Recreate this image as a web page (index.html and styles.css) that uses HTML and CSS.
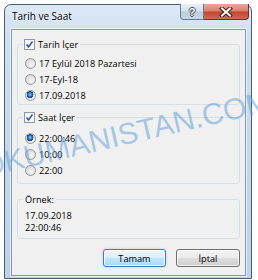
FILE: index.html
```html
<!DOCTYPE html>
<html lang="tr">
<head>
<meta charset="utf-8">
<title>Tarih ve Saat</title>
<link rel="stylesheet" href="styles.css">
</head>
<body>
<div class="window">
  <div class="titlebar">
    <span class="title">Tarih ve Saat</span>
    <div class="caption-btns">
      <span class="cbtn help">?</span>
      <span class="cbtn close">
        <svg width="14" height="10" viewBox="0 0 14 10">
          <path d="M3 1.5 L11 8.5 M11 1.5 L3 8.5" stroke="#4a1a14" stroke-width="4" stroke-linecap="square"/>
          <path d="M3 1.5 L11 8.5 M11 1.5 L3 8.5" stroke="#ffffff" stroke-width="2" stroke-linecap="square"/>
        </svg>
      </span>
    </div>
  </div>
  <div class="client">
    <div class="group g1">
      <div class="legend">
        <span class="check"><svg width="9" height="9" viewBox="0 0 9 9"><path d="M1.5 4.5 L3.5 7 L7.5 1.5" fill="none" stroke="#2f58a8" stroke-width="1.6"/></svg></span>
        <span>Tarih İçer</span>
      </div>
      <div class="opt"><span class="radio"></span>17 Eylül 2018 Pazartesi</div>
      <div class="opt"><span class="radio"></span>17-Eyl-18</div>
      <div class="opt"><span class="radio on"></span>17.09.2018</div>
    </div>
    <div class="group g2">
      <div class="legend">
        <span class="check"><svg width="9" height="9" viewBox="0 0 9 9"><path d="M1.5 4.5 L3.5 7 L7.5 1.5" fill="none" stroke="#2f58a8" stroke-width="1.6"/></svg></span>
        <span>Saat İçer</span>
      </div>
      <div class="opt"><span class="radio on"></span>22:00:46</div>
      <div class="opt"><span class="radio"></span>10:00</div>
      <div class="opt"><span class="radio"></span>22:00</div>
    </div>
    <div class="group g3">
      <div class="legend plain"><span>Örnek:</span></div>
      <div class="line">17.09.2018</div>
      <div class="line">22:00:46</div>
    </div>
    <div class="buttons">
      <button class="btn default">Tamam</button>
      <button class="btn">İptal</button>
    </div>
  </div>
</div>
<div class="wm">DOKUMANISTAN.COM</div>
</body>
</html>
```
FILE: styles.css
```css
html, body {
  margin: 0;
  padding: 0;
  background: #ffffff;
}
body {
  font-family: "Segoe UI", "Open Sans", sans-serif;
  font-size: 9.2px;
  color: #000;
  position: relative;
  width: 258px;
  height: 280px;
  overflow: hidden;
}
.window {
  margin: 4px 0 0 4px;
  width: 248px;
  height: 275px;
  box-sizing: border-box;
  border: 1px solid #4d5e72;
  border-radius: 7px 7px 0 0;
  background: linear-gradient(180deg, #dde9f5 0%, #cddff0 12%, #c3d7ec 60%, #bcd2ea 100%);
  padding: 0 5px 2px 6px;
  display: flex;
  flex-direction: column;
}
.titlebar {
  height: 24px;
  display: flex;
  align-items: flex-start;
  flex-shrink: 0;
}
.title {
  font-size: 10px;
  line-height: 14px;
  margin: 4px 0 0 1px;
  color: #000;
  text-shadow: 0 0 4px rgba(255,255,255,0.9);
}
.caption-btns {
  margin-left: auto;
  margin-right: -3px;
  margin-top: -1px;
  display: flex;
}
.cbtn {
  height: 16px;
  box-sizing: border-box;
  display: flex;
  align-items: center;
  justify-content: center;
}
.help {
  width: 24px;
  border: 1px solid #6b7b8f;
  border-top: none;
  border-radius: 0 0 0 4px;
  background: linear-gradient(180deg, #e8eff7 0%, #d6e1ee 45%, #bccbdc 55%, #c9d7e6 100%);
  color: #fff;
  font-family: "Liberation Sans", sans-serif;
  font-weight: bold;
  font-size: 11px;
  line-height: 14px;
  text-shadow: 1px 0 0 #3d4a5a, -1px 0 0 #3d4a5a, 0 1px 0 #3d4a5a, 0 -1px 0 #3d4a5a;
}
.close {
  width: 45px;
  border: 1px solid #6e3028;
  border-top: none;
  border-left: none;
  border-radius: 0 0 4px 0;
  background: linear-gradient(180deg, #e7a99d 0%, #d9816f 45%, #c2452f 55%, #d26a52 100%);
}
.client {
  height: 247px;
  box-sizing: border-box;
  border: 1px solid #8598b0;
  box-shadow: 0 0 0 1px rgba(255,255,255,0.6);
  background: #f0f0f0;
  padding: 0 5px;
  display: flex;
  flex-direction: column;
}
.group {
  border: 1px solid #d5dfe5;
  border-radius: 3px;
  padding-left: 7px;
  display: flex;
  flex-direction: column;
}
.g1 {
  margin-top: 14px;
  padding-bottom: 1px;
}
.g2 {
  margin-top: 12px;
  padding-bottom: 5px;
}
.g3 {
  margin-top: 15px;
  padding-bottom: 4px;
}
.legend {
  align-self: flex-start;
  height: 14px;
  margin: -8px 0 0 -3px;
  padding: 0 2px;
  background: #f0f0f0;
  display: flex;
  align-items: center;
  gap: 3px;
}
.legend.plain {
  margin-left: -2px;
}
.g1 .legend { margin-bottom: 4px; }
.g2 .legend { margin-bottom: 6px; }
.g3 .legend { margin-bottom: 4px; }
.check {
  width: 11px;
  height: 11px;
  box-sizing: border-box;
  border: 1px solid #8e98a6;
  background: linear-gradient(135deg, #f4f4f4, #ffffff);
  display: flex;
  align-items: center;
  justify-content: center;
}
.opt {
  height: 16px;
  display: flex;
  align-items: center;
  gap: 3px;
}
.radio {
  width: 11px;
  height: 11px;
  box-sizing: border-box;
  border-radius: 50%;
  border: 1px solid #959595;
  background: radial-gradient(circle at 60% 65%, #f6f6f6 0%, #dedede 60%, #cfcfcf 100%);
}
.radio.on {
  background:
    radial-gradient(circle at 45% 40%, #9bd2f4 0%, #2a7ec4 25%, #123f7a 45%, rgba(18,63,122,0) 48%),
    radial-gradient(circle at 60% 65%, #f6f6f6 0%, #dedede 60%, #cfcfcf 100%);
}
.line {
  line-height: 12px;
}
.buttons {
  margin-top: 10px;
  display: flex;
  justify-content: flex-end;
  gap: 10px;
}
.btn {
  height: 18px;
  width: 64px;
  box-sizing: border-box;
  padding: 0;
  font-family: inherit;
  font-size: 9.2px;
  color: #000;
  border: 1px solid #707070;
  border-radius: 3px;
  background: linear-gradient(180deg, #f2f2f2 0%, #ebebeb 48%, #dddddd 52%, #cfcfcf 100%);
  box-shadow: inset 0 0 0 1px rgba(255,255,255,0.7);
}
.btn.default {
  width: 63px;
  border-color: #3c7fb1;
  background: linear-gradient(180deg, #eaf6fd 0%, #d9f0fc 48%, #bee6fd 52%, #a7d9f5 100%);
  box-shadow: inset 0 0 0 1px rgba(255,255,255,0.8), 0 0 2px rgba(60,160,230,0.5);
}
.wm {
  position: absolute;
  left: -37px;
  top: 157px;
  font-family: "Liberation Sans", Arial, sans-serif;
  font-size: 30px;
  line-height: 1;
  white-space: nowrap;
  color: rgba(90, 155, 215, 0.5);
  transform-origin: 0 25px;
  transform: rotate(-13deg);
  pointer-events: none;
}
```
